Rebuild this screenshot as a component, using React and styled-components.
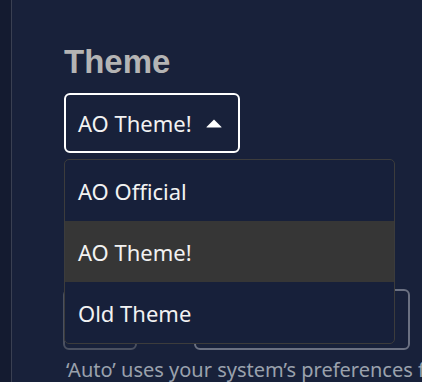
import React from 'react'
import styled, { createGlobalStyle } from 'styled-components'

const GlobalStyle = createGlobalStyle`
  html, body {
    margin: 0;
    padding: 0;
    background: #18213a;
    overflow: hidden;
  }
`

const Page = styled.div`
  display: flex;
  width: 422px;
  height: 382px;
  background: #18213a;
  overflow: hidden;
`

const Rail = styled.div`
  flex: 0 0 11px;
  background: #141b30;
  border-right: 1px solid #3a4052;
`

const Main = styled.main`
  flex: 1;
  min-width: 0;
  padding: 42px 0 0 52px;
  font-family: 'Noto Sans', 'Liberation Sans', sans-serif;
  color: #ffffff;
`

const Heading = styled.h2`
  margin: 0;
  font-family: 'Liberation Sans', Arial, sans-serif;
  font-size: 33px;
  line-height: 40px;
  font-weight: 700;
  color: #b4b4b4;
`

const SelectWrap = styled.div`
  position: relative;
  margin-top: 11px;
`

const SelectButton = styled.button`
  display: flex;
  align-items: center;
  gap: 14px;
  height: 60px;
  padding: 0 16px 0 12px;
  background: transparent;
  border: 2px solid #ffffff;
  border-radius: 6px;
  color: #f2f2f2;
  font-family: inherit;
  font-size: 22px;
`

const Menu = styled.ul`
  position: absolute;
  top: 66px;
  left: 0;
  width: 329px;
  margin: 0;
  padding: 0;
  list-style: none;
  background: #17203a;
  border: 1px solid #3c3c3c;
  border-radius: 5px;
  overflow: hidden;
  z-index: 2;
`

const Option = styled.li`
  display: flex;
  align-items: center;
  height: 61px;
  padding: 0 13px;
  font-size: 22px;
  color: #f2f2f2;
  background: ${p => (p.$active ? '#363636' : 'transparent')};
`

const ModeRow = styled.div`
  display: flex;
  gap: 57px;
  margin-top: 136px;
  margin-left: -1px;
`

const ModeBox = styled.div`
  width: ${p => p.$w}px;
  height: 61px;
  box-sizing: border-box;
  border: 2px solid ${p => p.$c};
  border-radius: 6px;
`

const Help = styled.p`
  margin: 6px 0 0 2px;
  font-size: 20px;
  line-height: 28px;
  color: #9aa1ad;
  white-space: nowrap;
`

const Caret = () => (
  <svg width="16" height="9" viewBox="0 0 16 9">
    <path d="M8 0.5 L15.5 8 Q15.6 8.5 15 8.5 L1 8.5 Q0.4 8.5 0.5 8 Z" fill="#ffffff" />
  </svg>
)

const themes = ['AO Official', 'AO Theme!', 'Old Theme']

export default function App() {
  return (
    <Page>
      <GlobalStyle />
      <Rail />
      <Main>
        <Heading>Theme</Heading>
        <SelectWrap>
          <SelectButton>
            AO Theme!
            <Caret />
          </SelectButton>
          <Menu>
            {themes.map(t => (
              <Option key={t} $active={t === 'AO Theme!'}>{t}</Option>
            ))}
          </Menu>
        </SelectWrap>
        <ModeRow>
          <ModeBox $w={74} $c="#4a5060" />
          <ModeBox $w={216} $c="#6b7182" />
        </ModeRow>
        <Help>‘Auto’ uses your system’s preferences for light or dark mode.</Help>
      </Main>
    </Page>
  )
}
